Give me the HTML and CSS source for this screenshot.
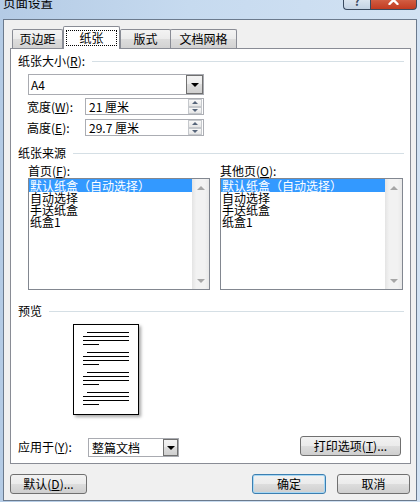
FILE: index.html
```html
<!DOCTYPE html>
<html>
<head>
<meta charset="utf-8">
<title>页面设置</title>
<link rel="stylesheet" href="styles.css">
</head>
<body>
<div class="window">
	<div class="titlebar">
		<span class="title">页面设置</span>
		<div class="caption">
			<span class="cbtn help">?</span>
			<span class="cbtn close">
				<svg width="11" height="10" viewBox="0 0 11 10"><path d="M1.5 1 L9.5 9 M9.5 1 L1.5 9" stroke="#fff" stroke-width="2.4" stroke-linecap="round"/></svg>
			</span>
		</div>
	</div>
	<div class="client">
		<div class="tabs">
			<div class="tab tab-margins">页边距</div>
			<div class="tab tab-paper active"><span class="focus">纸张</span></div>
			<div class="tab tab-layout">版式</div>
			<div class="tab tab-grid">文档网格</div>
		</div>
		<div class="panel">
			<div class="head">纸张大小(<u>R</u>):</div>
			<div class="combo combo-size">
				<span class="combo-text">A4</span>
				<span class="drop"></span>
			</div>
			<div class="field field-width">
				<label>宽度(<u>W</u>):</label>
				<div class="spin">
					<span class="spin-text">21 厘米</span>
					<span class="spin-btns"><b class="up"></b><b class="down"></b></span>
				</div>
			</div>
			<div class="field field-height">
				<label>高度(<u>E</u>):</label>
				<div class="spin">
					<span class="spin-text">29.7 厘米</span>
					<span class="spin-btns"><b class="up"></b><b class="down"></b></span>
				</div>
			</div>

			<div class="head head-source">纸张来源</div>
			<div class="sources">
				<div class="src src-first">
					<div class="src-label">首页(<u>F</u>):</div>
					<div class="listbox">
						<ul class="items">
							<li class="sel">默认纸盒（自动选择）</li>
							<li>自动选择</li>
							<li>手送纸盒</li>
							<li>纸盒1</li>
						</ul>
						<div class="vscroll"><b class="up"></b><b class="down"></b></div>
					</div>
				</div>
				<div class="src src-other">
					<div class="src-label">其他页(<u>O</u>):</div>
					<div class="listbox">
						<ul class="items">
							<li class="sel">默认纸盒（自动选择）</li>
							<li>自动选择</li>
							<li>手送纸盒</li>
							<li>纸盒1</li>
						</ul>
						<div class="vscroll"><b class="up"></b><b class="down"></b></div>
					</div>
				</div>
			</div>

			<div class="head head-preview">预览</div>
			<div class="page">
				<div class="para"><i class="first"></i><i></i><i></i><i class="last"></i></div>
				<div class="para"><i class="first"></i><i></i><i></i><i class="last"></i></div>
				<div class="para"><i class="first"></i><i></i><i></i><i class="last"></i></div>
				<div class="para"><i class="first"></i><i></i><i></i><i class="last"></i></div>
			</div>

			<div class="apply">
				<label>应用于(<u>Y</u>):</label>
				<div class="combo combo-apply">
					<span class="combo-text">整篇文档</span>
					<span class="drop"></span>
				</div>
				<div class="btn print">打印选项(<u>T</u>)...</div>
			</div>
		</div>
		<div class="footer">
			<div class="btn btn-reset">默认(<u>D</u>)...</div>
			<div class="btn ok">确定</div>
			<div class="btn cancel">取消</div>
		</div>
	</div>
</div>
</body>
</html>
```

FILE: styles.css
```css
* {
	box-sizing: border-box;
}
html, body {
	margin: 0;
	padding: 0;
	overflow: hidden;
}
body {
	width: 420px;
	height: 502px;
	font: 12px "Noto Sans CJK SC", "Liberation Sans", sans-serif;
	color: #000;
}
u {
	text-decoration: underline;
	text-underline-offset: 1px;
}

.window {
	height: 502px;
	display: flex;
	flex-direction: column;
	background: linear-gradient(to right, #b4cbe5, #c6daef 45%, #d2e2f3);
}

/* title bar, cut off at the top */
.titlebar {
	height: 19px;
	display: flex;
	align-items: flex-start;
	overflow: hidden;
}
.title {
	margin: -3px 0 0 3px;
	font-size: 12.5px;
	line-height: 12px;
}
.caption {
	display: flex;
	margin: -6px 3px 0 auto;
}
.cbtn {
	height: 16px;
	border: 1px solid #3a4a5f;
	border-top: none;
	display: flex;
	justify-content: center;
}
.help {
	width: 27px;
	border-right: none;
	border-radius: 0 0 0 4px;
	background: linear-gradient(#eaf1f8, #c3d2e3);
	color: #3a4a5f;
	font-weight: bold;
	line-height: 13px;
}
.close {
	width: 47px;
	border-radius: 0 0 4px 0;
	background: linear-gradient(#e8a592, #d05a3f 45%, #c23b21);
	align-items: flex-start;
	padding-top: 1px;
}

.client {
	flex: 1;
	margin: 0 3px 1px 3px;
	border: 1px solid #6b7a8d;
	background: #f0f0f0;
	display: flex;
	flex-direction: column;
}

/* tabs */
.tabs {
	display: flex;
	align-items: flex-end;
	height: 22px;
	margin: 6px 0 0 8px;
}
.tab {
	height: 19px;
	border: 1px solid #898c95;
	border-bottom: none;
	border-radius: 2px 2px 0 0;
	background: linear-gradient(#f3f3f3, #ebebeb 50%, #dddddd 50%, #d2d2d2);
	display: flex;
	align-items: center;
	justify-content: center;
	line-height: 12px;
}
.tab-margins { width: 51px; }
.tab-paper { width: 57px; }
.tab-layout { width: 51px; }
.tab-grid { width: 67px; margin-left: -1px; }
.tab.active {
	height: 23px;
	margin-bottom: -1px;
	background: #fff;
	position: relative;
	z-index: 1;
}
.focus {
	border: 1px dotted #000;
	padding: 1px 12px;
	line-height: 12px;
}

/* page */
.panel {
	margin-left: 6px;
	width: 401px;
	height: 416px;
	background: #fff;
	border: 1px solid #898c95;
	padding: 5px 6px 0 7px;
	display: flex;
	flex-direction: column;
}
.head {
	display: flex;
	align-items: center;
	height: 13px;
	line-height: 13px;
	white-space: nowrap;
}
.head::after {
	content: "";
	flex: 1;
	height: 1px;
	margin: 2px 0 0 7px;
	background: #d5dfe5;
}
.head-source { margin-top: 10px; }
.head-preview { margin-top: 14px; }

.combo {
	display: flex;
	border: 1px solid #a9abb1;
	background: #fff;
}
.combo-text {
	flex: 1;
	padding-left: 2px;
	white-space: nowrap;
}
.drop {
	border: 1px solid #707070;
	background: linear-gradient(#f3f3f3, #ebebeb 50%, #dddddd 50%, #cfcfcf);
	display: flex;
	align-items: center;
	justify-content: center;
}
.drop::before {
	content: "";
	border-left: 4px solid transparent;
	border-right: 4px solid transparent;
	border-top: 4px solid #000;
	margin-top: 1px;
}
.combo-size {
	width: 176px;
	height: 21px;
	margin: 7px 0 0 10px;
}
.combo-size .combo-text {
	line-height: 19px;
}
.combo-size .drop {
	width: 17px;
}

.field {
	display: flex;
	align-items: center;
	height: 17px;
	margin-left: 9px;
}
.field-width { margin-top: 3px; }
.field-height { margin-top: 4px; }
.field label {
	width: 58px;
	white-space: nowrap;
}
.spin {
	width: 119px;
	height: 17px;
	border: 1px solid #abadb3;
	display: flex;
}
.spin-text {
	flex: 1;
	padding-left: 3px;
	line-height: 15px;
}
.spin-btns {
	width: 14px;
	margin: 0 1px 0 0;
	display: flex;
	flex-direction: column;
}
.spin-btns b {
	flex: 1;
	border: 1px solid #c5c8cc;
	background: linear-gradient(#f8f8f8, #e6e6e6);
	display: flex;
	align-items: center;
	justify-content: center;
}
.spin-btns b::before,
.vscroll b::before {
	content: "";
	border-left: 3px solid transparent;
	border-right: 3px solid transparent;
}
.spin-btns .up::before { border-bottom: 3px solid #56657a; }
.spin-btns .down::before { border-top: 3px solid #56657a; }

/* paper source lists */
.sources {
	display: flex;
	gap: 10px;
	margin: 5px 0 0 10px;
}
.src {
	display: flex;
	flex-direction: column;
}
.src-first { width: 182px; }
.src-other { width: 183px; }
.src-label {
	height: 13px;
	line-height: 13px;
}
.listbox {
	margin-top: 1px;
	height: 112px;
	border: 1px solid #828790;
	display: flex;
}
.items {
	flex: 1;
	list-style: none;
	margin: 0;
	padding: 0;
}
.items li {
	height: 12px;
	line-height: 12px;
	padding-left: 1px;
	white-space: nowrap;
}
.items li.sel {
	height: 13px;
	line-height: 13px;
	background: #3399ff;
	color: #fff;
}
.vscroll {
	width: 17px;
	background: linear-gradient(to right, #e4e4e4, #f2f2f2 25%, #f2f2f2 75%, #e8e8e8);
	display: flex;
	flex-direction: column;
	justify-content: space-between;
}
.vscroll b {
	height: 17px;
	display: flex;
	align-items: center;
	justify-content: center;
}
.vscroll b::before {
	border-left-width: 4px;
	border-right-width: 4px;
}
.vscroll .up::before { border-bottom: 4px solid #a6a6a6; }
.vscroll .down::before { border-top: 4px solid #a6a6a6; }

/* preview */
.page {
	margin: 7px 0 0 55px;
	width: 66px;
	height: 91px;
	border: 1px solid #000;
	background: #fff;
	box-shadow: 2px 2px 3px rgba(0, 0, 0, 0.35);
	padding: 7px 0 0 9px;
	display: flex;
	flex-direction: column;
	gap: 7px;
}
.para {
	display: flex;
	flex-direction: column;
	gap: 3px;
}
.para i {
	display: block;
	width: 46px;
	height: 1px;
	background: #000;
}
.para i.first {
	width: 42px;
	margin-left: 4px;
}
.para i.last {
	width: 16px;
}

.apply {
	display: flex;
	align-items: flex-start;
	height: 20px;
	margin-top: 21px;
}
.apply label {
	width: 70px;
	line-height: 21px;
	white-space: nowrap;
}
.combo-apply {
	width: 91px;
	height: 19px;
	margin-top: 2px;
}
.combo-apply .combo-text {
	padding-left: 3px;
	line-height: 17px;
}
.combo-apply .drop {
	width: 15px;
}

/* buttons */
.btn {
	height: 20px;
	border: 1px solid #707070;
	border-radius: 3px;
	background: linear-gradient(#f2f2f2, #ebebeb 50%, #dddddd 50%, #cfcfcf);
	display: flex;
	align-items: center;
	justify-content: center;
	line-height: 12px;
	white-space: nowrap;
}
.print {
	width: 101px;
	margin: 0 3px 0 auto;
}
.footer {
	display: flex;
	margin-top: 10px;
	padding: 0 6px;
}
.btn-reset { width: 77px; }
.ok {
	width: 74px;
	margin-left: auto;
	border-color: #3c7fb1;
	box-shadow: inset 0 0 0 1px #a8d8f4;
}
.cancel {
	width: 73px;
	margin-left: 11px;
}
```
